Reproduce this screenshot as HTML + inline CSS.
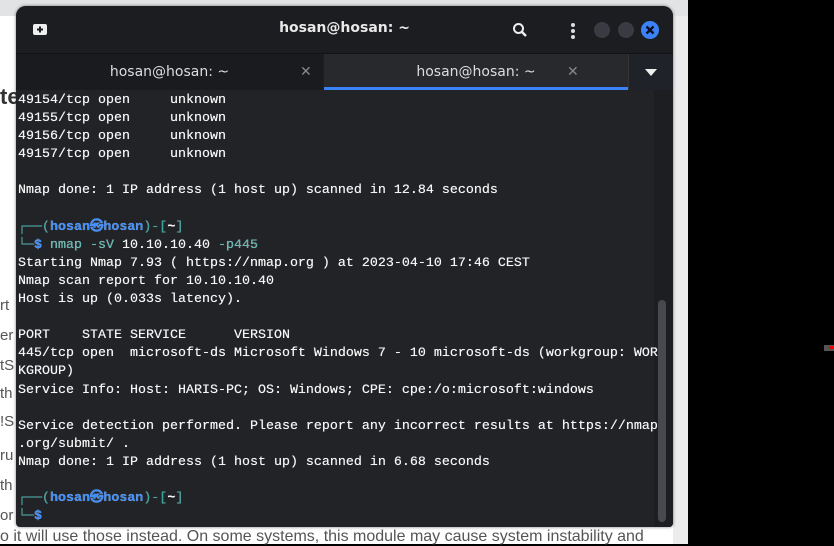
<!DOCTYPE html>
<html><head><style>
body{margin:0;width:834px;height:544px;overflow:hidden;background:#000;position:relative;font-family:"Liberation Sans",sans-serif}
.page{position:absolute;left:0;top:0;width:688px;height:544px;background:#fff}
.topstrip{position:absolute;left:0;top:0;width:688px;height:16px;background:#e1e3e5}
.frag{position:absolute;left:0;color:#555;font-size:15px;white-space:nowrap}
.term{position:absolute;left:16px;top:6px;width:657px;height:521px;background:#222327;border-radius:10px 10px 4px 4px;overflow:hidden;box-shadow:0 0 3px rgba(0,0,0,.5)}
.title{position:absolute;left:0;top:0;width:657px;height:47px;background:#1c1d20;border-bottom:1px solid #121214}
.title .t{position:absolute;left:0;width:657px;top:14px;text-align:center;color:#e8e8e8;font-weight:bold;font-size:14px;font-family:"DejaVu Sans",sans-serif}
.tabs{position:absolute;top:48px;left:0;width:657px;height:36px;background:#1e1f22}
.tab{position:absolute;top:0;height:36px;color:#ddd;font-size:14px;font-family:"DejaVu Sans",sans-serif;text-align:center;line-height:36px}
.x{position:absolute;color:#888;font-size:14px;top:0;line-height:36px}
pre{position:absolute;left:2px;top:86px;margin:0;font-family:"Liberation Mono",monospace;font-size:13.33px;line-height:18.1px;color:#f6f6f6;font-weight:500;text-shadow:0 0 0.4px #fff}
.b{color:#3d8fff;font-weight:bold}.c{color:#3aa3a0}.g{color:#5fb8b0}
</style></head><body>
<div class="page"></div><div class="topstrip"></div>
<div style="position:absolute;left:673px;top:16px;width:15px;height:528px;background:#ececec"></div>
<div style="position:absolute;left:824px;top:345px;width:10px;height:6px;background:#555"></div>
<div style="position:absolute;left:829px;top:346px;width:5px;height:3px;background:#e00"></div>
<div class="frag" style="top:84px;font-size:22px;font-weight:bold;color:#333">te</div>
<div class="frag" style="top:297px">rt</div>
<div class="frag" style="top:327px">er</div>
<div class="frag" style="top:357px">tS</div>
<div class="frag" style="top:385px">th</div>
<div class="frag" style="top:413px">!S</div>
<div class="frag" style="top:447px">ru</div>
<div class="frag" style="top:477px">th</div>
<div class="frag" style="top:507px">or</div>
<div class="frag" style="top:528px;font-size:16px">o it will use those instead. On some systems, this module may cause system instability and</div>
<div class="term">
<div class="title">
<svg style="position:absolute;left:16px;top:17px" width="16" height="14"><rect x="1" y="1" width="14" height="11" rx="2" fill="#eee"/><path d="M8 3.5v6M5 6.5h6" stroke="#1c1d20" stroke-width="2"/></svg>
<div class="t">hosan@hosan: ~</div>
<svg style="position:absolute;left:496px;top:16px" width="16" height="16"><circle cx="6.5" cy="6.5" r="4.5" stroke="#eee" stroke-width="2" fill="none"/><path d="M10 10l4 4" stroke="#eee" stroke-width="2.4"/></svg>
<svg style="position:absolute;left:554px;top:16px" width="6" height="18"><circle cx="3" cy="3" r="2" fill="#ddd"/><circle cx="3" cy="9" r="2" fill="#ddd"/><circle cx="3" cy="15" r="2" fill="#ddd"/></svg>
<div style="position:absolute;left:578px;top:16px;width:16px;height:16px;border-radius:50%;background:#3a3b42"></div>
<div style="position:absolute;left:602px;top:16px;width:16px;height:16px;border-radius:50%;background:#3a3b42"></div>
<svg style="position:absolute;left:625px;top:15px" width="18" height="18"><circle cx="9" cy="9" r="9" fill="#3b82f6"/><path d="M5.5 5.5l7 7M12.5 5.5l-7 7" stroke="#0c1020" stroke-width="2.4"/></svg>
</div>
<div class="tabs">
<div class="tab" style="left:0;width:307px;background:#1a1b1e">hosan@hosan: ~<span class="x" style="left:284px">✕</span></div>
<div class="tab" style="left:308px;width:304px;background:#28292d;border-bottom:3px solid #3b82f6;height:33px;line-height:36px">hosan@hosan: ~<span class="x" style="left:243px">✕</span></div>
<div style="position:absolute;left:612px;top:0;width:45px;height:36px;background:#1f2228;border-left:1px solid #333"><svg style="position:absolute;left:16px;top:15px" width="12" height="7"><path d="M0 0h12L6 7z" fill="#eee"/></svg></div>
</div>
<div style="position:absolute;left:638px;top:84px;width:19px;height:437px;background:#1d1e21"></div>
<div style="position:absolute;left:642px;top:294px;width:8px;height:222px;background:#48494e;border-radius:4px"></div>
<pre>49154/tcp open     unknown
49155/tcp open     unknown
49156/tcp open     unknown
49157/tcp open     unknown

Nmap done: 1 IP address (1 host up) scanned in 12.84 seconds

<span class="c">┌──(</span><span class="b">hosan㉿hosan</span><span class="c">)-[</span><span style="font-weight:bold">~</span><span class="c">]</span>
<span class="c">└─</span><span class="b">$</span> <span class="g">nmap</span> <span class="g">-sV</span> 10.10.10.40 <span class="g">-p445</span>
Starting Nmap 7.93 ( https://nmap.org ) at 2023-04-10 17:46 CEST
Nmap scan report for 10.10.10.40
Host is up (0.033s latency).

PORT    STATE SERVICE      VERSION
445/tcp open  microsoft-ds Microsoft Windows 7 - 10 microsoft-ds (workgroup: WOR
KGROUP)
Service Info: Host: HARIS-PC; OS: Windows; CPE: cpe:/o:microsoft:windows

Service detection performed. Please report any incorrect results at https://nmap
.org/submit/ .
Nmap done: 1 IP address (1 host up) scanned in 6.68 seconds

<span class="c">┌──(</span><span class="b">hosan㉿hosan</span><span class="c">)-[</span><span style="font-weight:bold">~</span><span class="c">]</span>
<span class="c">└─</span><span class="b">$</span> </pre>
</div>
</body></html>
